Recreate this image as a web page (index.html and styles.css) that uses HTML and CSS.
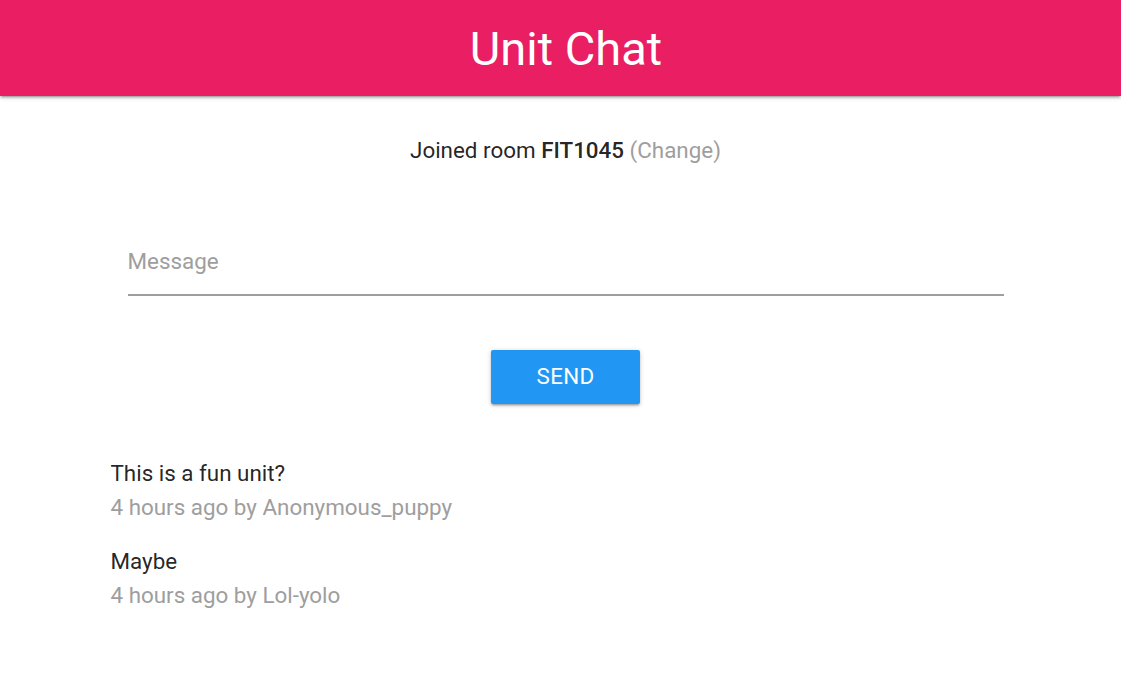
FILE: index.html
```html
<!DOCTYPE html>
<html>
<head>
<meta charset="utf-8">
<link rel="stylesheet" href="styles.css">
</head>
<body>
<header class="topbar"><h1 class="title">Unit Chat</h1></header>
<main class="container">
  <p class="room">Joined room <span class="room-name">FIT1045</span> <a class="change">(Change)</a></p>
  <div class="field">
    <input class="msg-input" type="text" placeholder="Message">
  </div>
  <div class="actions"><button class="send">SEND</button></div>
  <ul class="messages">
    <li class="message">
      <div class="msg-text">This is a fun unit?</div>
      <div class="msg-meta">4 hours ago by Anonymous_puppy</div>
    </li>
    <li class="message">
      <div class="msg-text">Maybe</div>
      <div class="msg-meta">4 hours ago by Lol-yolo</div>
    </li>
  </ul>
</main>
</body>
</html>
```
FILE: styles.css
```css
* { box-sizing: border-box; }
html, body { margin: 0; padding: 0; background: #fff; }
body { font-family: Roboto, "Noto Sans", sans-serif; color: rgba(0,0,0,0.87); }
.topbar {
  height: 96px;
  background: #e91e63;
  display: flex;
  align-items: center;
  justify-content: center;
  padding-left: 11px;
  box-shadow: 0 2px 2px 0 rgba(0,0,0,0.14), 0 3px 1px -2px rgba(0,0,0,0.12), 0 1px 5px 0 rgba(0,0,0,0.2);
}
.title { margin: 0; color: #fff; font-weight: 400; font-size: 47px; line-height: 1; }
.container { width: 910px; margin: 0 0 0 calc(50% - 450px); padding: 0; }
.room { text-align: center; font-size: 22.4px; margin: 42px 0 0; line-height: 24px; }
.room-name { font-weight: 500; }
.change { color: #9e9e9e; }
.field { padding: 0 17px; margin-top: 84px; }
.msg-input {
  display: block;
  width: 100%;
  border: none;
  border-bottom: 2px solid #9e9e9e;
  outline: none;
  font-family: inherit;
  font-size: 22.4px;
  height: 50px;
  padding: 0 0 19px;
  color: rgba(0,0,0,0.87);
}
.msg-input::placeholder { color: #9e9e9e; }
.actions { display: flex; justify-content: center; margin-top: 54px; }
.send {
  width: 149px;
  height: 54px;
  border: none;
  border-radius: 2px;
  background: #2196f3;
  color: #fff;
  font-family: inherit;
  font-size: 22.4px;
  letter-spacing: .3px;
  padding: 0 0 2px;
  box-shadow: 0 2px 2px 0 rgba(0,0,0,0.14), 0 3px 1px -2px rgba(0,0,0,0.12), 0 1px 5px 0 rgba(0,0,0,0.2);
}
.messages { list-style: none; margin: 52px 0 0; padding: 0; }
.message { margin-bottom: 20px; }
.msg-text { font-size: 22.4px; line-height: 34px; }
.msg-meta { font-size: 22.4px; line-height: 34px; color: #9e9e9e; }
```
